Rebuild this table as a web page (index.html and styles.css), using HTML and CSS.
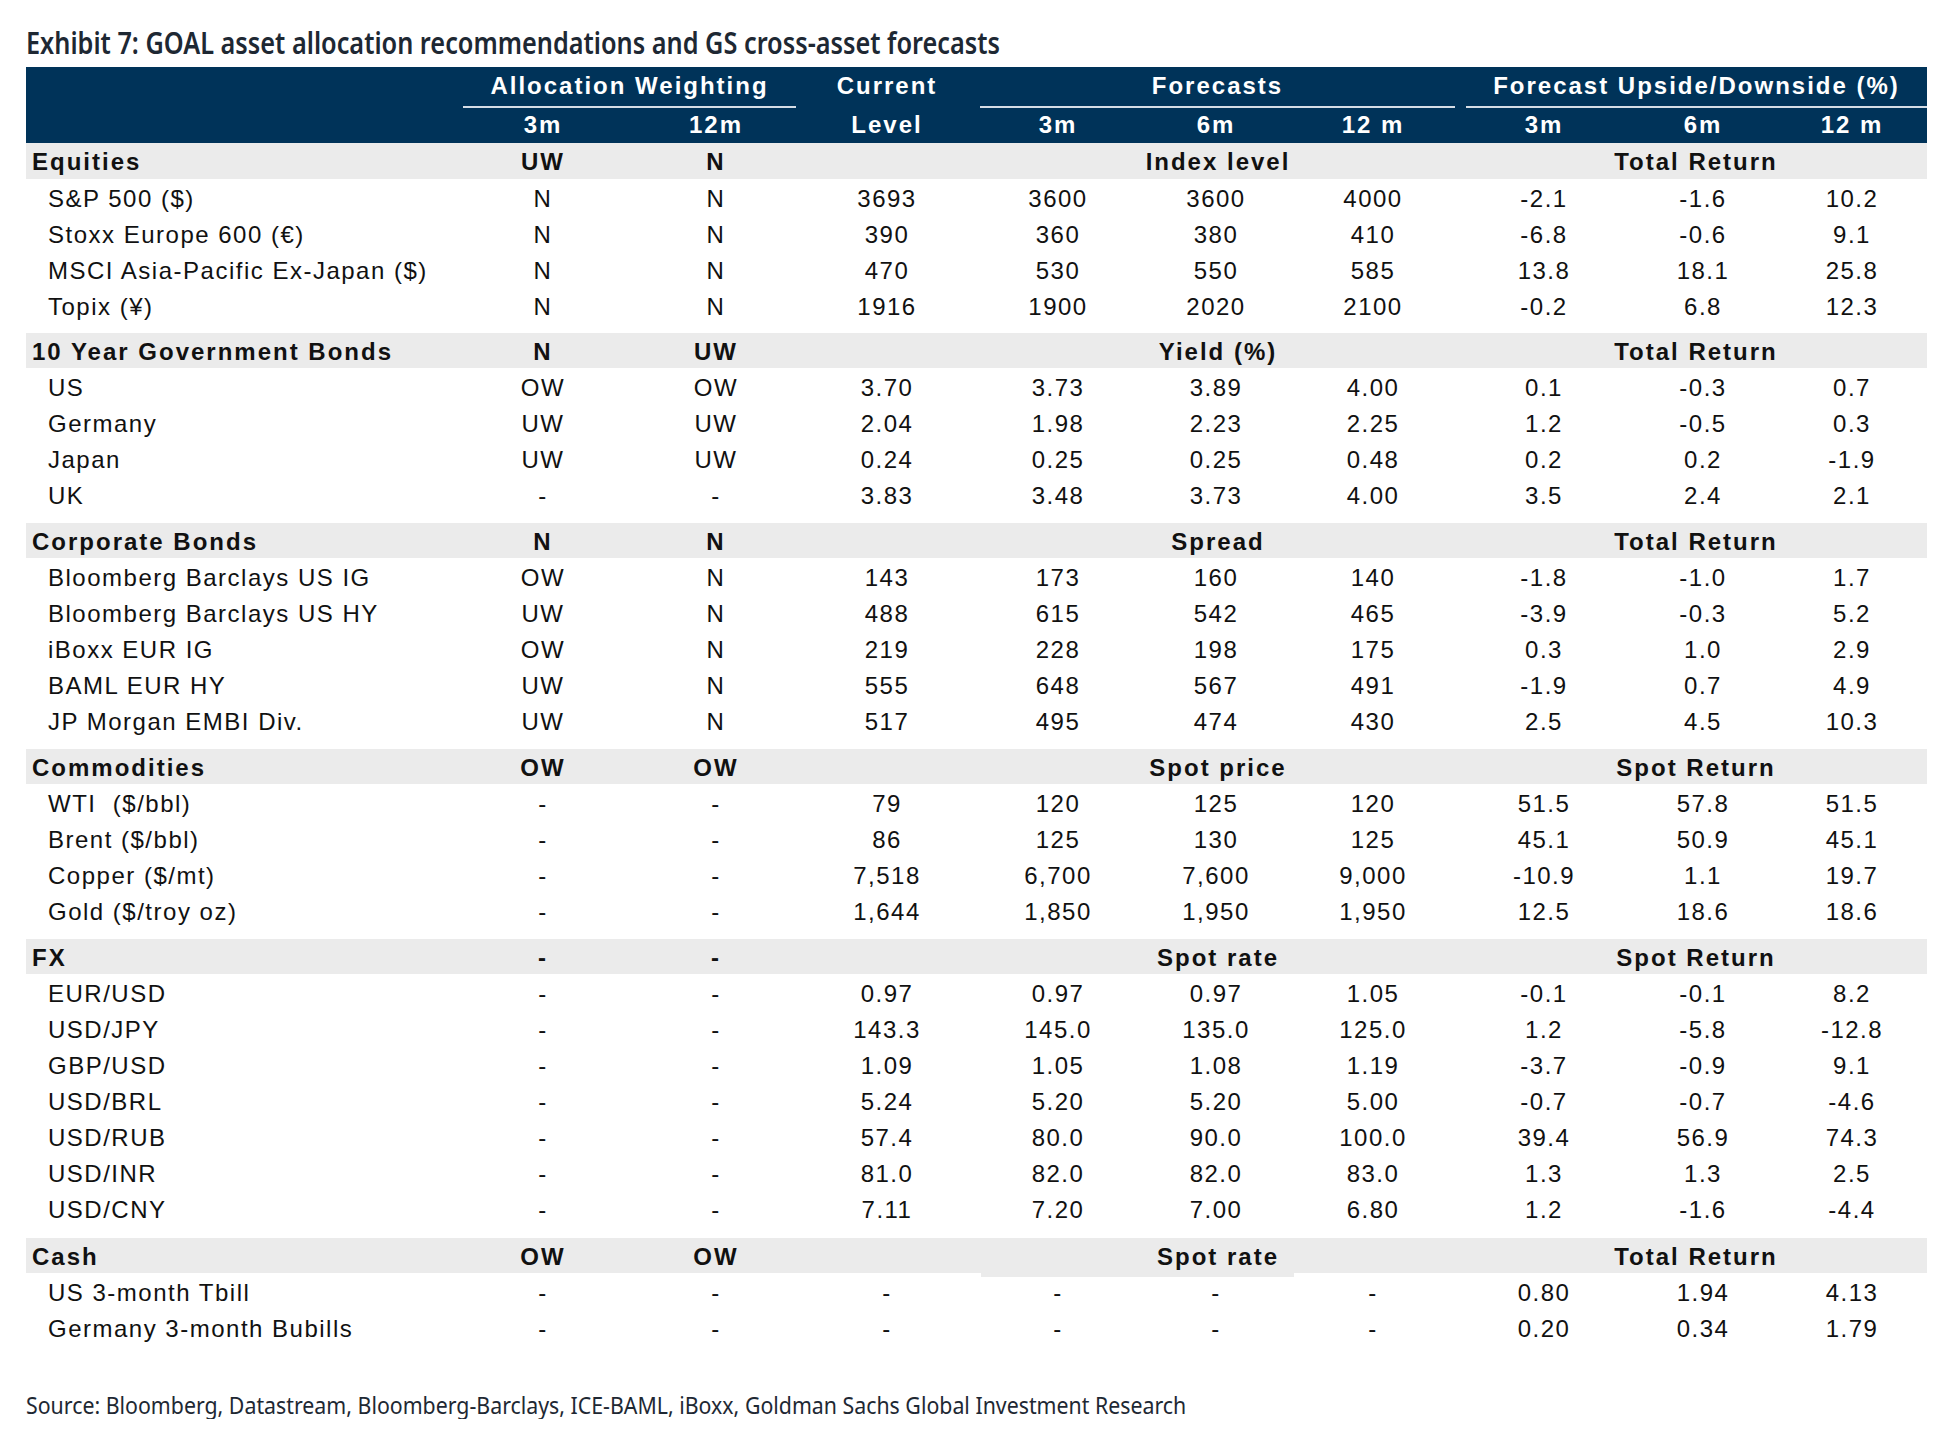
FILE: index.html
```html
<!DOCTYPE html>
<html lang="en">
<head>
<meta charset="utf-8">
<title>Exhibit 7</title>
<link rel="stylesheet" href="styles.css">
</head>
<body>
<div class="page">
  <h1 class="title">Exhibit 7: GOAL asset allocation recommendations and GS cross-asset forecasts</h1>

  <div class="table">
    <div class="head">
      <div class="row head1">
        <div></div>
        <div class="span2"><div class="hline alloc">Allocation Weighting</div></div>
        <div class="hcell">Current</div>
        <div class="span3"><div class="hline fc">Forecasts</div></div>
        <div class="span3"><div class="hline up">Forecast Upside/Downside (%)</div></div>
      </div>
      <div class="row head2">
        <div></div>
        <div>3m</div><div>12m</div><div>Level</div>
        <div>3m</div><div>6m</div><div>12 m</div>
        <div>3m</div><div>6m</div><div class="last">12 m</div>
      </div>
    </div>

    <div class="row group first">
      <div class="lbl">Equities</div><div>UW</div><div>N</div><div></div>
      <div class="span3">Index level</div><div class="span3">Total Return</div>
    </div>
    <div class="row data"><div class="lbl">S&amp;P 500 ($)</div><div>N</div><div>N</div><div>3693</div><div>3600</div><div>3600</div><div>4000</div><div>-2.1</div><div>-1.6</div><div class="last">10.2</div></div>
    <div class="row data"><div class="lbl">Stoxx Europe 600 (€)</div><div>N</div><div>N</div><div>390</div><div>360</div><div>380</div><div>410</div><div>-6.8</div><div>-0.6</div><div class="last">9.1</div></div>
    <div class="row data"><div class="lbl">MSCI Asia-Pacific Ex-Japan ($)</div><div>N</div><div>N</div><div>470</div><div>530</div><div>550</div><div>585</div><div>13.8</div><div>18.1</div><div class="last">25.8</div></div>
    <div class="row data"><div class="lbl">Topix (¥)</div><div>N</div><div>N</div><div>1916</div><div>1900</div><div>2020</div><div>2100</div><div>-0.2</div><div>6.8</div><div class="last">12.3</div></div>

    <div class="row group g-bonds">
      <div class="lbl">10 Year Government Bonds</div><div>N</div><div>UW</div><div></div>
      <div class="span3">Yield (%)</div><div class="span3">Total Return</div>
    </div>
    <div class="row data"><div class="lbl">US</div><div>OW</div><div>OW</div><div>3.70</div><div>3.73</div><div>3.89</div><div>4.00</div><div>0.1</div><div>-0.3</div><div class="last">0.7</div></div>
    <div class="row data"><div class="lbl">Germany</div><div>UW</div><div>UW</div><div>2.04</div><div>1.98</div><div>2.23</div><div>2.25</div><div>1.2</div><div>-0.5</div><div class="last">0.3</div></div>
    <div class="row data"><div class="lbl">Japan</div><div>UW</div><div>UW</div><div>0.24</div><div>0.25</div><div>0.25</div><div>0.48</div><div>0.2</div><div>0.2</div><div class="last">-1.9</div></div>
    <div class="row data"><div class="lbl">UK</div><div>-</div><div>-</div><div>3.83</div><div>3.48</div><div>3.73</div><div>4.00</div><div>3.5</div><div>2.4</div><div class="last">2.1</div></div>

    <div class="row group g-corp">
      <div class="lbl">Corporate Bonds</div><div>N</div><div>N</div><div></div>
      <div class="span3">Spread</div><div class="span3">Total Return</div>
    </div>
    <div class="row data"><div class="lbl">Bloomberg Barclays US IG</div><div>OW</div><div>N</div><div>143</div><div>173</div><div>160</div><div>140</div><div>-1.8</div><div>-1.0</div><div class="last">1.7</div></div>
    <div class="row data"><div class="lbl">Bloomberg Barclays US HY</div><div>UW</div><div>N</div><div>488</div><div>615</div><div>542</div><div>465</div><div>-3.9</div><div>-0.3</div><div class="last">5.2</div></div>
    <div class="row data"><div class="lbl">iBoxx EUR IG</div><div>OW</div><div>N</div><div>219</div><div>228</div><div>198</div><div>175</div><div>0.3</div><div>1.0</div><div class="last">2.9</div></div>
    <div class="row data"><div class="lbl">BAML EUR HY</div><div>UW</div><div>N</div><div>555</div><div>648</div><div>567</div><div>491</div><div>-1.9</div><div>0.7</div><div class="last">4.9</div></div>
    <div class="row data"><div class="lbl">JP Morgan EMBI Div.</div><div>UW</div><div>N</div><div>517</div><div>495</div><div>474</div><div>430</div><div>2.5</div><div>4.5</div><div class="last">10.3</div></div>

    <div class="row group g-comm">
      <div class="lbl">Commodities</div><div>OW</div><div>OW</div><div></div>
      <div class="span3">Spot price</div><div class="span3">Spot Return</div>
    </div>
    <div class="row data"><div class="lbl">WTI&nbsp; ($/bbl)</div><div>-</div><div>-</div><div>79</div><div>120</div><div>125</div><div>120</div><div>51.5</div><div>57.8</div><div class="last">51.5</div></div>
    <div class="row data"><div class="lbl">Brent ($/bbl)</div><div>-</div><div>-</div><div>86</div><div>125</div><div>130</div><div>125</div><div>45.1</div><div>50.9</div><div class="last">45.1</div></div>
    <div class="row data"><div class="lbl">Copper ($/mt)</div><div>-</div><div>-</div><div>7,518</div><div>6,700</div><div>7,600</div><div>9,000</div><div>-10.9</div><div>1.1</div><div class="last">19.7</div></div>
    <div class="row data"><div class="lbl">Gold ($/troy oz)</div><div>-</div><div>-</div><div>1,644</div><div>1,850</div><div>1,950</div><div>1,950</div><div>12.5</div><div>18.6</div><div class="last">18.6</div></div>

    <div class="row group g-fx">
      <div class="lbl">FX</div><div>-</div><div>-</div><div></div>
      <div class="span3">Spot rate</div><div class="span3">Spot Return</div>
    </div>
    <div class="row data"><div class="lbl">EUR/USD</div><div>-</div><div>-</div><div>0.97</div><div>0.97</div><div>0.97</div><div>1.05</div><div>-0.1</div><div>-0.1</div><div class="last">8.2</div></div>
    <div class="row data"><div class="lbl">USD/JPY</div><div>-</div><div>-</div><div>143.3</div><div>145.0</div><div>135.0</div><div>125.0</div><div>1.2</div><div>-5.8</div><div class="last">-12.8</div></div>
    <div class="row data"><div class="lbl">GBP/USD</div><div>-</div><div>-</div><div>1.09</div><div>1.05</div><div>1.08</div><div>1.19</div><div>-3.7</div><div>-0.9</div><div class="last">9.1</div></div>
    <div class="row data"><div class="lbl">USD/BRL</div><div>-</div><div>-</div><div>5.24</div><div>5.20</div><div>5.20</div><div>5.00</div><div>-0.7</div><div>-0.7</div><div class="last">-4.6</div></div>
    <div class="row data"><div class="lbl">USD/RUB</div><div>-</div><div>-</div><div>57.4</div><div>80.0</div><div>90.0</div><div>100.0</div><div>39.4</div><div>56.9</div><div class="last">74.3</div></div>
    <div class="row data"><div class="lbl">USD/INR</div><div>-</div><div>-</div><div>81.0</div><div>82.0</div><div>82.0</div><div>83.0</div><div>1.3</div><div>1.3</div><div class="last">2.5</div></div>
    <div class="row data"><div class="lbl">USD/CNY</div><div>-</div><div>-</div><div>7.11</div><div>7.20</div><div>7.00</div><div>6.80</div><div>1.2</div><div>-1.6</div><div class="last">-4.4</div></div>

    <div class="row group g-cash">
      <div class="lbl">Cash</div><div>OW</div><div>OW</div><div></div>
      <div class="span3 ext">Spot rate</div><div class="span3">Total Return</div>
    </div>
    <div class="row data"><div class="lbl">US 3-month Tbill</div><div>-</div><div>-</div><div>-</div><div>-</div><div>-</div><div>-</div><div>0.80</div><div>1.94</div><div class="last">4.13</div></div>
    <div class="row data"><div class="lbl">Germany 3-month Bubills</div><div>-</div><div>-</div><div>-</div><div>-</div><div>-</div><div>-</div><div>0.20</div><div>0.34</div><div class="last">1.79</div></div>
  </div>

  <p class="source">Source: Bloomberg, Datastream, Bloomberg-Barclays, ICE-BAML, iBoxx, Goldman Sachs Global Investment Research</p>
</div>
</body>
</html>
```

FILE: styles.css
```css
html, body {
  margin: 0;
  padding: 0;
  background: #ffffff;
}

.page {
  width: 1901px;
  padding: 0 0 0 26px;
}

.title {
  margin: 25px 0 6px 0;
  height: 36px;
  font-family: "Noto Sans", "DejaVu Sans", sans-serif;
  font-weight: 600;
  font-size: 30px;
  line-height: 36px;
  color: #1e2833;
  white-space: nowrap;
  transform: scaleX(0.843);
  transform-origin: 0 0;
}

.table {
  font-family: "Liberation Sans", Arial, sans-serif;
  font-size: 24px;
  color: #111111;
}

.row {
  display: grid;
  grid-template-columns: 431px 172px 174px 168px 174px 142px 172px 170px 148px 150px;
  text-align: center;
  white-space: nowrap;
}

.span2 { grid-column: span 2; }
.span3 { grid-column: span 3; }

.head {
  background: #003359;
  color: #ffffff;
  font-weight: 700;
  letter-spacing: 2px;
}

.head1 {
  height: 41px;
  line-height: 32px;
}

.head1 > div {
  padding-top: 3px;
}

.head1 > .span2,
.head1 > .span3 {
  padding-top: 0;
}

.hline {
  height: 41px;
  box-sizing: border-box;
  padding-top: 3px;
  border-bottom: 2px solid #d5dde6;
}

.hline.alloc { margin: 0 7px 0 6px; }
.hline.fc { margin: 0 4px 0 9px; }
.hline.up { margin: 0 0 0 7px; }

.head2 {
  height: 35px;
  line-height: 32px;
}

.head2 > div {
  padding-top: 1px;
}

.group {
  height: 35px;
  line-height: 32px;
  background: #ebebeb;
  font-weight: 700;
  letter-spacing: 2px;
  margin-top: 11px;
}

.group > div {
  padding-top: 3px;
}

.group > .span3 {
  padding-left: 6px;
}

.group.first {
  margin-top: 0;
  height: 36px;
}

.group.g-bonds { margin-top: 10px; }
.group.g-cash { margin-top: 12px; }

.group .lbl {
  text-align: left;
  padding-left: 6px;
}

.ext {
  position: relative;
}

.ext::after {
  content: "";
  position: absolute;
  left: 10px;
  top: 100%;
  width: 313px;
  height: 4px;
  background: #ebebeb;
}

.data {
  height: 36px;
  line-height: 32px;
  letter-spacing: 1.5px;
}

.data > div {
  padding-top: 4px;
}

.data .lbl {
  text-align: left;
  padding-left: 22px;
}

.source {
  margin: 46px 0 0 0;
  font-family: "Noto Sans", "DejaVu Sans", sans-serif;
  font-weight: 400;
  font-size: 23px;
  line-height: 28px;
  color: #1e2833;
  white-space: nowrap;
  transform: scaleX(0.927);
  transform-origin: 0 0;
}
```
